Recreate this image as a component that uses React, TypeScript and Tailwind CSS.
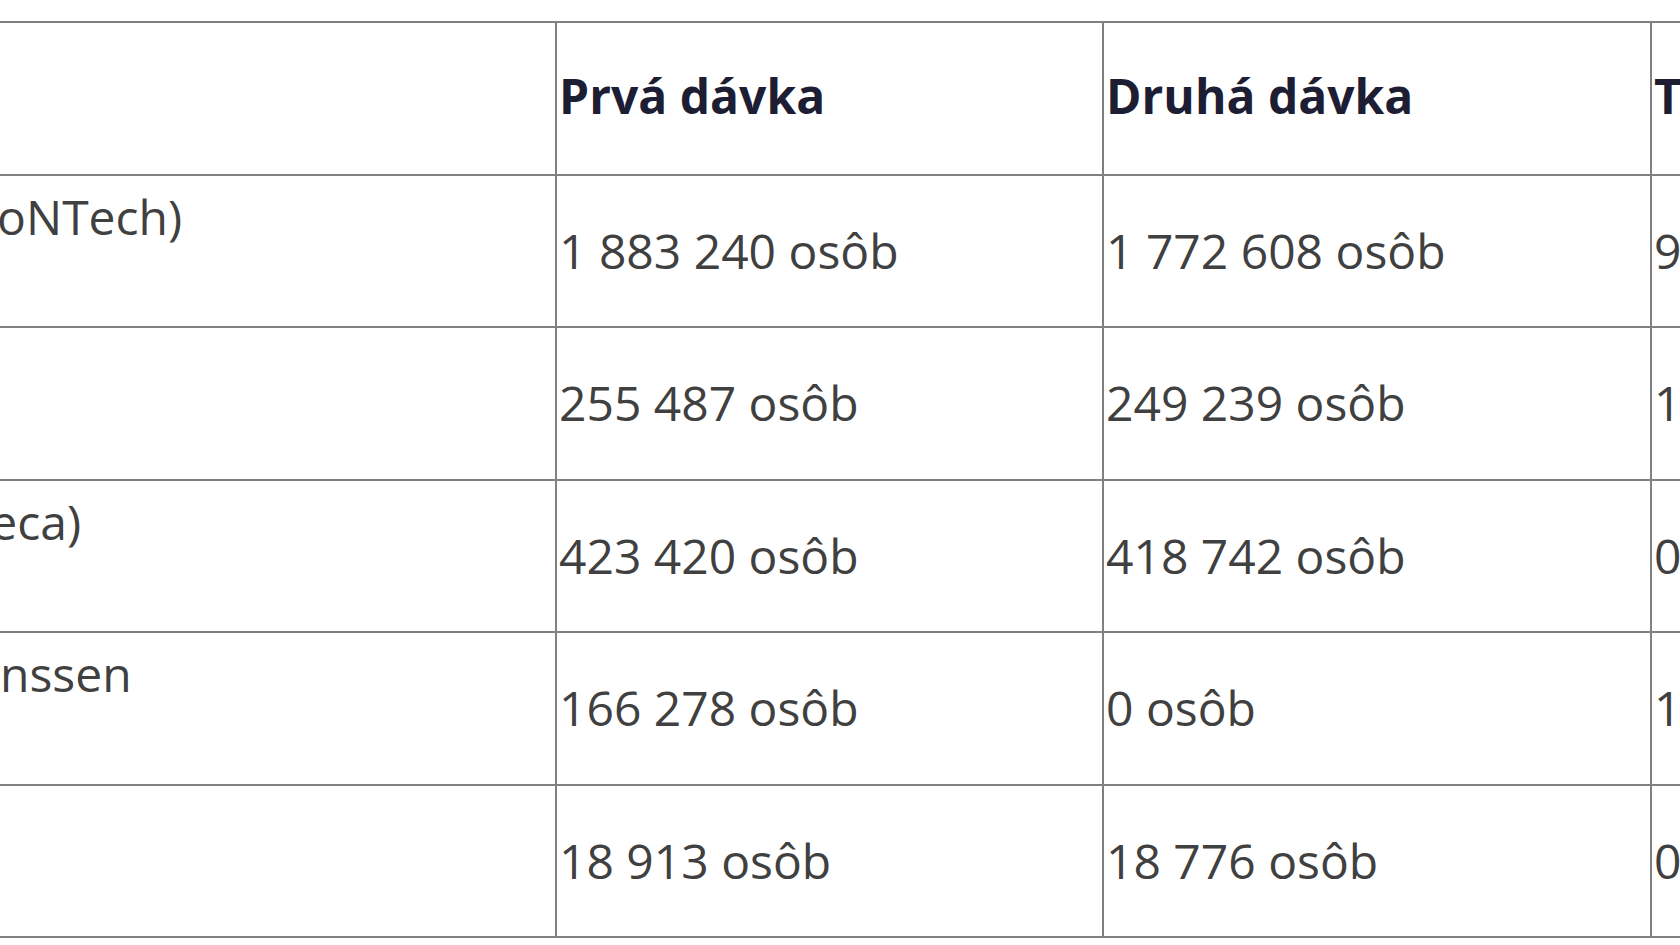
import React from 'react';

interface VaccineRow {
  name: string[];
  first: string;
  second: string;
  third: string;
}

const rows: VaccineRow[] = [
  { name: ['Comirnaty (Pfizer/BioNTech)', 'mRNA'], first: '1 883 240 osôb', second: '1 772 608 osôb', third: '935 154 osôb' },
  { name: ['Spikevax (Moderna)', 'mRNA'], first: '255 487 osôb', second: '249 239 osôb', third: '126 317 osôb' },
  { name: ['Vaxzevria (AstraZeneca)', 'vektor'], first: '423 420 osôb', second: '418 742 osôb', third: '0 osôb' },
  { name: ['COVID-19 Vaccine Janssen', 'vektor'], first: '166 278 osôb', second: '0 osôb', third: '1 271 osôb' },
  { name: ['Sputnik V', 'vektor'], first: '18 913 osôb', second: '18 776 osôb', third: '0 osôb' },
];

export default function App() {
  return (
    <div className="h-screen w-full overflow-hidden bg-white font-['Open_Sans',sans-serif] text-[48px] leading-[64px] text-[#404040]">
      <div className="pt-[21px]">
        <table className="ml-[-453px] w-[2657px] table-fixed border-collapse">
          <colgroup>
            <col className="w-[1008px]" />
            <col className="w-[547px]" />
            <col className="w-[548px]" />
            <col className="w-[554px]" />
          </colgroup>
          <thead>
            <tr className="h-[152.5px]">
              <th className="border-2 border-[#808080] px-[2px]" />
              <th className="border-2 border-[#808080] px-[2px] pb-[4px] text-left align-middle font-bold text-[#1d1d33]">Prvá dávka</th>
              <th className="border-2 border-[#808080] px-[2px] pb-[4px] text-left align-middle font-bold text-[#1d1d33]">Druhá dávka</th>
              <th className="border-2 border-[#808080] px-[2px] pb-[4px] text-left align-middle font-bold text-[#1d1d33]">Tretia dávka</th>
            </tr>
          </thead>
          <tbody>
            {rows.map(r => (
              <tr key={r.name[0]} className="h-[152.5px]">
                <td className="border-2 border-[#808080] px-[2px] pt-[9px] align-top">
                  <div className="whitespace-nowrap">{r.name[0]}</div>
                  <div className="whitespace-nowrap">{r.name[1]}</div>
                </td>
                <td className="border-2 border-[#808080] px-[2px] align-middle whitespace-nowrap">{r.first}</td>
                <td className="border-2 border-[#808080] px-[2px] align-middle whitespace-nowrap">{r.second}</td>
                <td className="border-2 border-[#808080] px-[2px] align-middle whitespace-nowrap">{r.third}</td>
              </tr>
            ))}
          </tbody>
        </table>
      </div>
    </div>
  );
}
